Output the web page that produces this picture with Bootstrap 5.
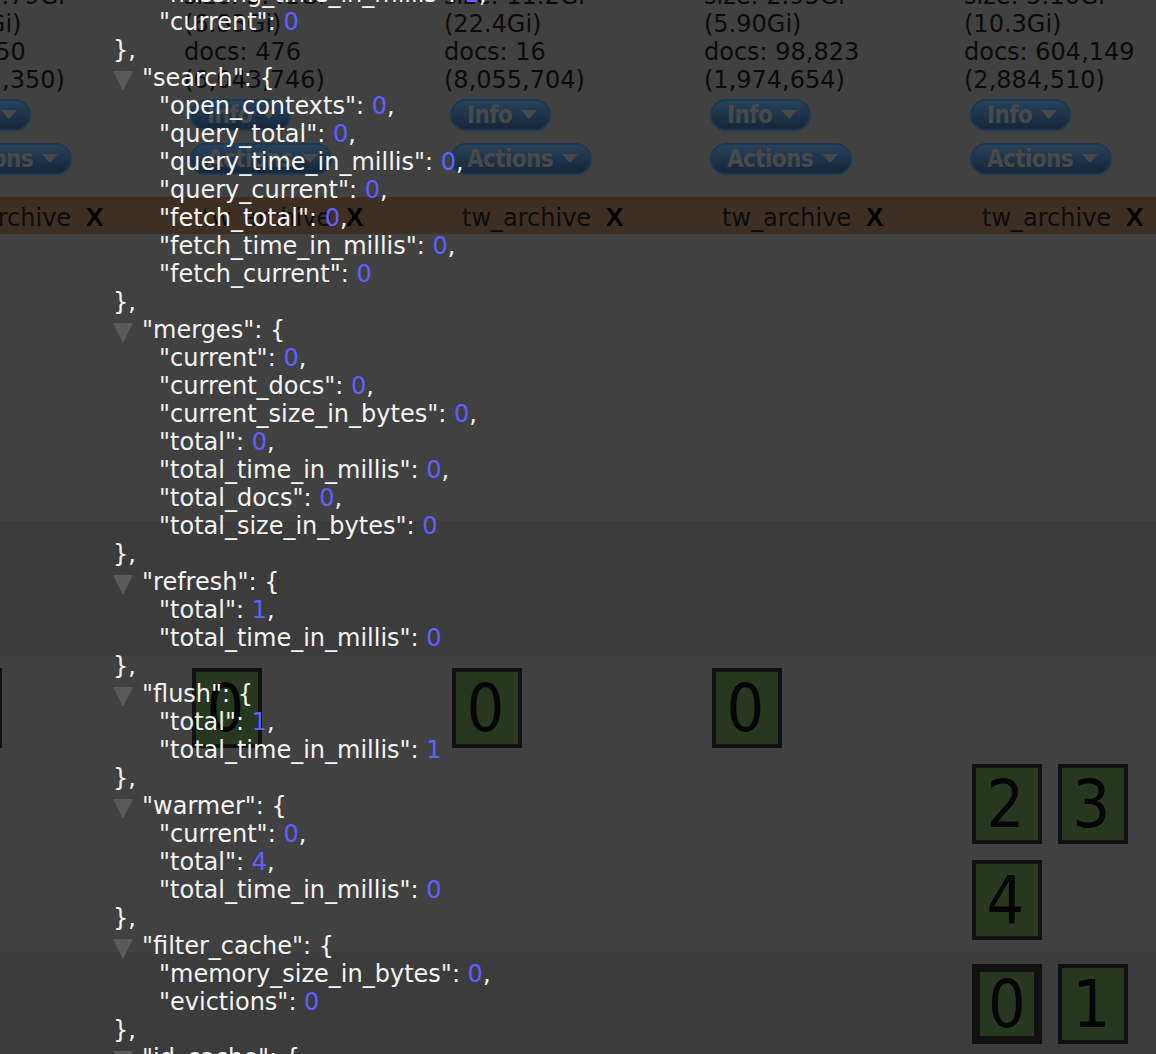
<!DOCTYPE html>
<html lang="en">
<head>
<meta charset="utf-8">
<title>Cluster overview</title>
<link rel="stylesheet" href="https://cdn.jsdelivr.net/npm/bootstrap@5.3.0/dist/css/bootstrap.min.css">
<style>
html,body{height:1054px;overflow:hidden}
body{background:#414141;font-family:"DejaVu Sans",sans-serif;font-size:24px;line-height:28px;color:#0c0c0c;position:relative}
.sheet{margin-left:-76px;margin-top:-18px;width:1400px}
.cols{display:flex}
.cols>div{flex:0 0 260px;width:260px}
.band-top{height:215px}
.info-text{white-space:nowrap}
.pill{display:block;width:max-content;margin:0 0 12px 6px;height:32px;padding:0 12px 0 15px;border:2px solid #1d3850;border-radius:16px;background:linear-gradient(#27425b,#162739);color:#494949;font:700 24px/27px "DejaVu Sans Condensed","DejaVu Sans",sans-serif;letter-spacing:-.6px}
.pill-first{margin-top:5px}
.pill:hover,.pill:active{background:linear-gradient(#27425b,#162739);color:#494949;border-color:#1d3850}
.pill::after{margin-left:9px;vertical-align:4px;border-top:9px solid #494949;border-left:8px solid transparent;border-right:8px solid transparent;border-bottom:0}
.band-index{background:#3e2f24;height:37px;line-height:41px}
.band-index .nm{padding-left:18px;display:inline-block;width:162px}
.band-index b{font-family:"Liberation Sans",sans-serif;font-weight:700;font-size:26px;color:#000}
.gap-a{height:287px}
.band-dim{height:135px;background:#3c3c3c}
.band-boxes{height:296px;background:#414141;padding-top:12px}
.band-last{height:120px;background:#3c3c3c;padding-top:12px}
.shard-grid{width:172px}
.shard{width:70px;height:80px;border:4px solid #111;background:#283720;font-family:"DejaVu Sans Condensed","DejaVu Sans",sans-serif;font-size:66px;line-height:74px;text-align:center;color:#050505;margin:0 8px 16px 8px;padding-right:3px;flex:none}
.shard-main{border-width:8px;line-height:66px;padding-right:0}
.json{position:absolute;left:0;top:-20px;z-index:5;color:#f4f4f4;font-size:24px;line-height:28px}
.json .ln{height:28px;white-space:pre}
.json .l1{padding-left:113px}
.json .l2{padding-left:159px}
.json i{font-style:normal;color:#6060ff}
.tri{display:inline-block;width:0;height:0;border-top:20px solid #5a5a5a;border-left:10px solid transparent;border-right:10px solid transparent;margin-right:9px;vertical-align:-5px}
</style>
</head>
<body>
<main class="sheet">
  <section class="cols band-top">
    <div class="info-text">size: 1.79Gi<br>(3.58Gi)<br>docs: 50<br>(1,387,350)<button class="btn pill pill-first dropdown-toggle">Info</button><button class="btn pill dropdown-toggle">Actions</button></div>
    <div class="info-text">size: 3.41Gi<br>(6.83Gi)<br>docs: 476<br>(6,043,746)<button class="btn pill pill-first dropdown-toggle">Info</button><button class="btn pill dropdown-toggle">Actions</button></div>
    <div class="info-text">size: 11.2Gi<br>(22.4Gi)<br>docs: 16<br>(8,055,704)<button class="btn pill pill-first dropdown-toggle">Info</button><button class="btn pill dropdown-toggle">Actions</button></div>
    <div class="info-text">size: 2.95Gi<br>(5.90Gi)<br>docs: 98,823<br>(1,974,654)<button class="btn pill pill-first dropdown-toggle">Info</button><button class="btn pill dropdown-toggle">Actions</button></div>
    <div class="info-text">size: 5.16Gi<br>(10.3Gi)<br>docs: 604,149<br>(2,884,510)<button class="btn pill pill-first dropdown-toggle">Info</button><button class="btn pill dropdown-toggle">Actions</button></div>
  </section>
  <section class="cols band-index">
    <div><span class="nm">tw_archive</span><b>X</b></div>
    <div><span class="nm">tw_archive</span><b>X</b></div>
    <div><span class="nm">tw_archive</span><b>X</b></div>
    <div><span class="nm">tw_archive</span><b>X</b></div>
    <div><span class="nm">tw_archive</span><b>X</b></div>
  </section>
  <section class="gap-a"></section>
  <section class="band-dim"></section>
  <section class="cols band-boxes">
    <div><div class="shard">0</div></div>
    <div><div class="shard">0</div></div>
    <div><div class="shard">0</div></div>
    <div><div class="shard">0</div></div>
    <div class="pt-5 mt-5"><div class="d-flex flex-wrap shard-grid"><div class="shard">2</div><div class="shard">3</div><div class="shard">4</div></div></div>
  </section>
  <section class="cols band-last">
    <div></div><div></div><div></div><div></div>
    <div><div class="d-flex flex-wrap shard-grid"><div class="shard shard-main">0</div><div class="shard">1</div></div></div>
  </section>
</main>
<div class="json">
<div class="ln l2">"missing_time_in_millis": <i>1</i>,</div>
<div class="ln l2">"current": <i>0</i></div>
<div class="ln l1">},</div>
<div class="ln l1"><span class="tri"></span>"search": {</div>
<div class="ln l2">"open_contexts": <i>0</i>,</div>
<div class="ln l2">"query_total": <i>0</i>,</div>
<div class="ln l2">"query_time_in_millis": <i>0</i>,</div>
<div class="ln l2">"query_current": <i>0</i>,</div>
<div class="ln l2">"fetch_total": <i>0</i>,</div>
<div class="ln l2">"fetch_time_in_millis": <i>0</i>,</div>
<div class="ln l2">"fetch_current": <i>0</i></div>
<div class="ln l1">},</div>
<div class="ln l1"><span class="tri"></span>"merges": {</div>
<div class="ln l2">"current": <i>0</i>,</div>
<div class="ln l2">"current_docs": <i>0</i>,</div>
<div class="ln l2">"current_size_in_bytes": <i>0</i>,</div>
<div class="ln l2">"total": <i>0</i>,</div>
<div class="ln l2">"total_time_in_millis": <i>0</i>,</div>
<div class="ln l2">"total_docs": <i>0</i>,</div>
<div class="ln l2">"total_size_in_bytes": <i>0</i></div>
<div class="ln l1">},</div>
<div class="ln l1"><span class="tri"></span>"refresh": {</div>
<div class="ln l2">"total": <i>1</i>,</div>
<div class="ln l2">"total_time_in_millis": <i>0</i></div>
<div class="ln l1">},</div>
<div class="ln l1"><span class="tri"></span>"flush": {</div>
<div class="ln l2">"total": <i>1</i>,</div>
<div class="ln l2">"total_time_in_millis": <i>1</i></div>
<div class="ln l1">},</div>
<div class="ln l1"><span class="tri"></span>"warmer": {</div>
<div class="ln l2">"current": <i>0</i>,</div>
<div class="ln l2">"total": <i>4</i>,</div>
<div class="ln l2">"total_time_in_millis": <i>0</i></div>
<div class="ln l1">},</div>
<div class="ln l1"><span class="tri"></span>"filter_cache": {</div>
<div class="ln l2">"memory_size_in_bytes": <i>0</i>,</div>
<div class="ln l2">"evictions": <i>0</i></div>
<div class="ln l1">},</div>
<div class="ln l1"><span class="tri"></span>"id_cache": {</div>
</div>
<script src="https://cdn.jsdelivr.net/npm/bootstrap@5.3.0/dist/js/bootstrap.bundle.min.js"></script>
</body>
</html>
